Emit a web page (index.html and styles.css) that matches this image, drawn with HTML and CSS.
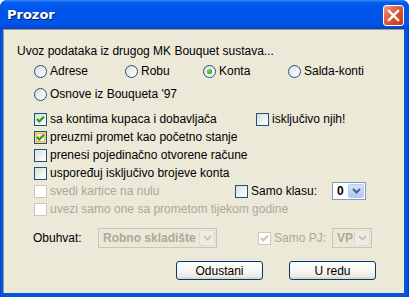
FILE: index.html
```html
<!DOCTYPE html>
<html lang="hr">
<head>
    <meta charset="UTF-8">
    <title>Prozor</title>
    <link rel="stylesheet" href="styles.css">
</head>
<body>
    <div class="window">
        <div class="titlebar">
            <span class="title">Prozor</span>
            <span class="close">
                <svg width="19" height="19" viewBox="0 0 19 19">
                    <path d="M5 5 L14 14 M14 5 L5 14" stroke="#fff" stroke-width="2.4" stroke-linecap="square"/>
                </svg>
            </span>
        </div>
        <div class="client">
            <p class="intro">Uvoz podataka iz drugog MK Bouquet sustava...</p>

            <div class="radios">
                <label class="opt"><span class="radio"></span>Adrese</label>
                <label class="opt"><span class="radio"></span>Robu</label>
                <label class="opt"><span class="radio on"></span>Konta</label>
                <label class="opt"><span class="radio"></span>Salda-konti</label>
            </div>
            <div class="radios second">
                <label class="opt"><span class="radio"></span>Osnove iz Bouqueta '97</label>
            </div>

            <div class="checks">
                <div class="row">
                    <label class="opt col-a"><span class="box"><svg class="tick" width="11" height="11" viewBox="0 0 11 11"><path d="M2 5 L4.3 7.4 L9 2.7" stroke="#21a121" stroke-width="2.2" fill="none"/></svg></span>sa kontima kupaca i dobavljača</label>
                    <label class="opt"><span class="box"></span>isključivo njih!</label>
                </div>
                <div class="row">
                    <label class="opt"><span class="box hover"><svg class="tick" width="11" height="11" viewBox="0 0 11 11"><path d="M2 5 L4.3 7.4 L9 2.7" stroke="#21a121" stroke-width="2.2" fill="none"/></svg></span>preuzmi promet kao početno stanje</label>
                </div>
                <div class="row">
                    <label class="opt"><span class="box"></span>prenesi pojedinačno otvorene račune</label>
                </div>
                <div class="row">
                    <label class="opt"><span class="box"></span>uspoređuj isključivo brojeve konta</label>
                </div>
                <div class="row">
                    <label class="opt off col-b"><span class="box"></span>svedi kartice na nulu</label>
                    <label class="opt col-c"><span class="box"></span>Samo klasu:</label>
                    <span class="combo small">
                        <span class="value">0</span>
                        <span class="drop"><svg width="9" height="6" viewBox="0 0 9 6"><path d="M1 1 L4.5 4.5 L8 1" stroke="#4d6185" stroke-width="2" fill="none"/></svg></span>
                    </span>
                </div>
                <div class="row">
                    <label class="opt off"><span class="box"></span>uvezi samo one sa prometom tijekom godine</label>
                </div>
            </div>

            <div class="scope">
                <span class="scope-label">Obuhvat:</span>
                <span class="combo wide disabled">
                    <span class="value">Robno skladište</span>
                    <span class="drop"><svg width="9" height="6" viewBox="0 0 9 6"><path d="M1 1 L4.5 4.5 L8 1" stroke="#c9c7ba" stroke-width="2" fill="none"/></svg></span>
                </span>
                <label class="opt off pj"><span class="box"><svg class="tick" width="11" height="11" viewBox="0 0 11 11"><path d="M2 5 L4.3 7.4 L9 2.7" stroke="#cac8bb" stroke-width="2.2" fill="none"/></svg></span>Samo PJ:</label>
                <span class="combo narrow disabled">
                    <span class="value">VP</span>
                    <span class="drop"><svg width="9" height="6" viewBox="0 0 9 6"><path d="M1 1 L4.5 4.5 L8 1" stroke="#c9c7ba" stroke-width="2" fill="none"/></svg></span>
                </span>
            </div>

            <div class="actions">
                <button class="btn">Odustani</button>
                <button class="btn">U redu</button>
            </div>
        </div>
    </div>
</body>
</html>
```

FILE: styles.css
```css
/* XP-stil dijalog */
body {
    margin: 0;
    background: #ffffff;
    font-family: "Liberation Sans", Arial, sans-serif;
    font-size: 12px;
    color: #000;
}
.window {
    width: 409px;
    height: 297px;
    display: flex;
    flex-direction: column;
    background: linear-gradient(to right, #0831d9 0, #0855dd 1px, #0855dd 407px, #0831d9 409px);
    border-radius: 7px 7px 0 0;
    overflow: hidden;
}
.titlebar {
    height: 29px;
    display: flex;
    align-items: flex-start;
    justify-content: space-between;
    padding: 0 5px 0 7px;
    background: linear-gradient(to bottom, #3b8cf7 0, #0b61ed 2px, #0058ee 4px, #0054e6 12px, #0056eb 22px, #0050e0 26px, #0142c6 29px);
}
.title {
    color: #fff;
    font-family: "DejaVu Sans", sans-serif;
    font-weight: bold;
    font-size: 13px;
    margin-top: 7px;
    text-shadow: 1px 1px 0 #0a246a;
}
.close {
    width: 21px;
    height: 21px;
    margin-top: 5px;
    box-sizing: border-box;
    border: 1px solid #fff;
    border-radius: 3px;
    background: linear-gradient(135deg, #f0a087 0%, #e3694a 35%, #d44b2b 65%, #c13a1c 100%);
    display: flex;
    align-items: center;
    justify-content: center;
}
.client {
    flex: 1;
    margin: 0 5px 4px 3px;
    background: #ece9d8;
    border-top: 1px solid #9d9a8a;
    border-left: 1px solid #9d9a8a;
    padding-top: 13px;
}
.intro {
    margin: 0 0 0 13px;
    line-height: 16px;
}
.opt {
    display: flex;
    align-items: center;
    gap: 3px;
    height: 18px;
    white-space: nowrap;
}
.opt.off {
    color: #aca899;
}
.radios {
    display: grid;
    grid-template-columns: 91px 78px 85px auto;
    margin: 3px 0 0 30px;
}
.radios.second {
    display: flex;
    margin-top: 5px;
}
.radio {
    flex-shrink: 0;
    width: 13px;
    height: 13px;
    box-sizing: border-box;
    border: 1px solid #1c5180;
    border-radius: 50%;
    background: linear-gradient(135deg, #dcdcd7 0%, #f4f4f2 60%, #fff 100%);
    display: flex;
    align-items: center;
    justify-content: center;
}
.radio.on::after {
    content: "";
    width: 5px;
    height: 5px;
    border-radius: 50%;
    background: radial-gradient(circle at 35% 35%, #6fe16f, #21a121 70%);
}
.checks {
    margin: 7px 0 0 30px;
}
.row {
    display: flex;
    align-items: center;
    height: 18px;
}
.col-a {
    width: 222px;
}
.col-b {
    width: 201px;
}
.col-c {
    width: 97px;
}
.box {
    flex-shrink: 0;
    width: 13px;
    height: 13px;
    box-sizing: border-box;
    border: 1px solid #1c5180;
    background: linear-gradient(135deg, #dcdcd7 0%, #f2f2ef 60%, #fff 100%);
    display: flex;
    align-items: center;
    justify-content: center;
}
.box.hover {
    box-shadow: inset 0 0 0 1px #fcd47a, inset 0 0 0 2px #f7b63d;
}
.off .box {
    border-color: #cac8bb;
    background: #fff;
}
.combo {
    display: flex;
    align-items: stretch;
    box-sizing: border-box;
    border: 1px solid #7f9db9;
    background: #fff;
    padding: 1px;
    font-weight: bold;
}
.combo .value {
    flex: 1;
    display: flex;
    align-items: center;
    padding-left: 3px;
}
.combo .drop {
    width: 16px;
    border-radius: 2px;
    background: linear-gradient(to bottom, #d6e2fd 0%, #c1d3fb 50%, #b2c7f6 100%);
    border: 1px solid #b8cbf5;
    box-sizing: border-box;
    display: flex;
    align-items: center;
    justify-content: center;
}
.combo.small {
    width: 34px;
    height: 18px;
}
.combo.disabled {
    border-color: #c9c7ba;
    background: #ebe8d7;
    color: #aca899;
}
.combo.disabled .drop {
    background: #eeede5;
    border-color: #dedbd0;
}
.scope {
    display: flex;
    align-items: center;
    height: 20px;
    margin: 10px 0 0 29px;
}
.scope-label {
    width: 65px;
}
.combo.wide {
    width: 119px;
    height: 20px;
}
.pj {
    margin-left: 41px;
    width: 74px;
}
.combo.narrow {
    width: 40px;
    height: 20px;
}
.actions {
    display: flex;
    justify-content: flex-end;
    gap: 26px;
    margin: 13px 28px 0 0;
}
.btn {
    width: 87px;
    height: 19px;
    padding: 0;
    font-family: inherit;
    font-size: 12px;
    color: #000;
    border: 1px solid #003c74;
    border-radius: 3px;
    background: linear-gradient(to bottom, #ffffff 0%, #f5f4ef 60%, #ece9e1 85%, #d6d0c5 100%);
}
```
